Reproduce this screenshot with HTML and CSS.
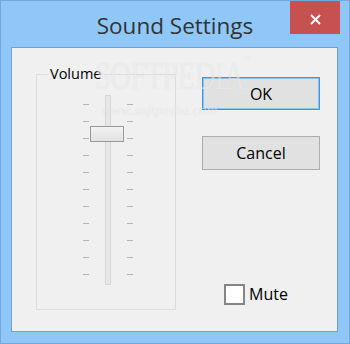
FILE: index.html
```html
<!DOCTYPE html>
<html lang="en">
<head>
  <meta charset="UTF-8" />
  <meta name="viewport" content="width=device-width, initial-scale=1" />
  <title>Sound Settings</title>
  <link rel="stylesheet" href="styles.css">
</head>
<body>
  <div class="window">
    <div class="titlebar">
      <span class="title">Sound Settings</span>
      <button class="close" aria-label="Close">
        <svg width="11" height="11" viewBox="0 0 11 11">
          <path d="M1 1 L10 10 M10 1 L1 10" stroke="#fff" stroke-width="2" fill="none" />
        </svg>
      </button>
    </div>

    <div class="client">
      <div class="group">
        <div class="group-label">Volume</div>
        <div class="slider">
          <div class="ticks">
            <i></i><i></i><i></i><i></i><i></i><i></i><i></i><i></i><i></i><i></i><i></i>
          </div>
          <div class="rail">
            <div class="track"></div>
            <div class="thumb"></div>
          </div>
          <div class="ticks">
            <i></i><i></i><i></i><i></i><i></i><i></i><i></i><i></i><i></i><i></i><i></i>
          </div>
        </div>
      </div>

      <div class="actions">
        <button class="btn btn-default">OK</button>
        <button class="btn btn-cancel">Cancel</button>
        <label class="mute">
          <span class="check"></span>
          <span>Mute</span>
        </label>
      </div>
    </div>

    <!-- watermark from the screenshot -->
    <div class="watermark">
      <span class="wm-big">SOFTPEDIA<sup>™</sup></span>
      <span class="wm-small">www.softpedia.com</span>
    </div>
  </div>
</body>
</html>
```

FILE: styles.css
```css
body {
  margin: 0;
  padding: 0;
  font-family: 'Open Sans', 'Noto Sans', sans-serif;
  background: #fff;
}

.window {
  position: relative;
  width: 350px;
  height: 344px;
  box-sizing: border-box;
  border: 1px solid #72a9dc;
  background: #8fc8f8;
  display: flex;
  flex-direction: column;
  overflow: hidden;
}

.titlebar {
  position: relative;
  height: 46px;
  flex: none;
  text-align: center;
}

.title {
  display: block;
  font-size: 22.5px;
  line-height: 46px;
  color: #333;
  padding-top: 2px;
}

.close {
  position: absolute;
  top: 0;
  right: 9px;
  width: 50px;
  height: 33px;
  border: none;
  padding: 4px 0 0;
  margin: 0;
  background: #c75050;
  display: flex;
  align-items: center;
  justify-content: center;
}

.client {
  flex: 1;
  margin: 0 11px 11px 10px;
  border: 1px solid #6fa3d3;
  background: #f0f0f0;
  display: flex;
  align-items: flex-start;
  padding: 26px 0 0 24px;
}

.group {
  width: 140px;
  height: 236px;
  box-sizing: border-box;
  border: 1px solid #dcdcdc;
  flex: none;
}

.group-label {
  width: max-content;
  margin: -9px 0 0 11px;
  padding: 0 2px;
  height: 16px;
  line-height: 16px;
  font-size: 14.5px;
  color: #000;
  background: #f0f0f0;
}

.slider {
  display: flex;
  margin: 13px 0 0 46px;
  height: 190px;
}

.ticks {
  width: 6px;
  height: 171px;
  margin-top: 9px;
  display: flex;
  flex-direction: column;
  justify-content: space-between;
}

.ticks i {
  display: block;
  height: 1px;
  background: #b4b4b4;
}

.rail {
  position: relative;
  width: 38px;
  display: flex;
  justify-content: center;
}

.track {
  width: 6px;
  height: 190px;
  box-sizing: border-box;
  border: 1px solid #d6d6d6;
  background: #e7e7e7;
}

.thumb {
  position: absolute;
  top: 31px;
  left: 1px;
  width: 34px;
  height: 16px;
  box-sizing: border-box;
  border: 1px solid #999;
  background: linear-gradient(#f2f2f2, #e2e2e2);
}

.actions {
  width: 118px;
  height: 236px;
  margin-left: 26px;
  padding-top: 3px;
  box-sizing: border-box;
  display: flex;
  flex-direction: column;
  flex: none;
}

.btn {
  font-family: inherit;
  font-size: 16px;
  color: #000;
  background: #e1e1e1;
  border: 1px solid #adadad;
  margin: 0;
  padding: 0;
}

.btn-default {
  height: 33px;
  border-color: #3c96e6;
  box-shadow: inset 0 0 0 1px #8cc3f1;
}

.btn-cancel {
  height: 34px;
  margin-top: 26px;
}

.mute {
  margin-top: auto;
  margin-bottom: 5px;
  padding-left: 22px;
  display: flex;
  align-items: center;
  gap: 4px;
  font-size: 16px;
  color: #000;
}

.check {
  width: 21px;
  height: 21px;
  box-sizing: border-box;
  border: 2px solid #858585;
  background: #fff;
}

/* 透かし */
.watermark {
  position: absolute;
  left: 94px;
  top: 52px;
  display: flex;
  flex-direction: column;
  pointer-events: none;
  font-family: 'Liberation Serif', serif;
  color: rgba(255, 255, 255, 0.5);
  text-shadow: 0 0 1px rgba(0, 0, 0, 0.1);
}

.wm-big {
  font-size: 40px;
  letter-spacing: -1px;
  line-height: 46px;
  transform: scaleX(0.72);
  transform-origin: left;
}

.wm-big sup {
  font-size: 10px;
  vertical-align: top;
  line-height: 14px;
}

.wm-small {
  margin: 2px 0 0 6px;
  font-size: 15px;
  font-style: italic;
  line-height: 18px;
}
```
